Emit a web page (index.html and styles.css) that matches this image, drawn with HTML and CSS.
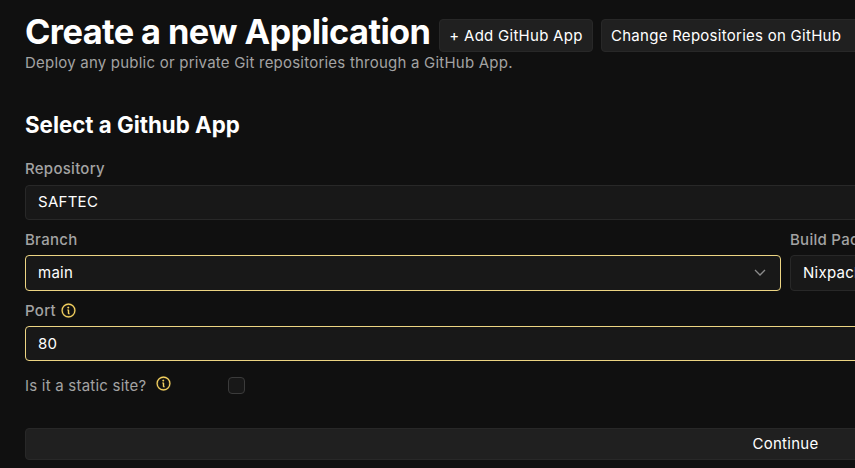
FILE: index.html
```html
<!DOCTYPE html>
<html lang="en">
<head>
<meta charset="utf-8">
<title>Create a new Application</title>
<link rel="stylesheet" href="styles.css">
</head>
<body>
<svg class="sprite" aria-hidden="true">
  <symbol id="info" viewBox="0 0 256 256">
    <path fill="currentColor" d="M128 24a104 104 0 1 0 104 104A104.110 104.110 0 0 0 128 24m0 192a88 88 0 1 1 88-88 88.100 88.100 0 0 1-88 88m16-40a8 8 0 0 1-8 8 16 16 0 0 1-16-16v-40a8 8 0 0 1 0-16 16 16 0 0 1 16 16v40a8 8 0 0 1 8 8m-32-92a12 12 0 1 1 12 12 12 12 0 0 1-12-12" stroke="currentColor" stroke-width="5"/>
  </symbol>
</svg>
<main class="page">
  <header class="header">
    <h1 class="title">Create a new Application</h1>
    <button class="button add">+ Add GitHub App</button>
    <button class="button change">Change Repositories on GitHub</button>
  </header>
  <p class="subtitle">Deploy any public or private Git repositories through a GitHub App.</p>
  <h2 class="section">Select a Github App</h2>
  <form class="form">
    <div class="field">
      <div class="label">Repository</div>
      <div class="control repository">SAFTEC</div>
    </div>
    <div class="row">
      <div class="field">
        <div class="label">Branch</div>
        <div class="control active tall">main
          <svg class="chevron" viewBox="0 0 12 8"><path d="M1 1l5 5 5-5"/></svg>
        </div>
      </div>
      <div class="field">
        <div class="label">Build Pack</div>
        <div class="control tall">Nixpacks</div>
      </div>
    </div>
    <div class="field port">
      <div class="label">Port <svg class="info"><use href="#info"/></svg></div>
      <div class="control active">80</div>
    </div>
    <div class="check">
      <div class="check-label"><span class="check-text">Is it a static site?</span> <svg class="info raised"><use href="#info"/></svg></div>
      <span class="box"></span>
    </div>
    <button class="button submit" type="button">Continue</button>
  </form>
</main>
</body>
</html>
```
FILE: styles.css
```css
* { box-sizing: border-box; margin: 0; }
html { overflow: hidden; background: #101010; }
body {
  height: 468px;
  overflow: hidden;
  background: #101010;
  color: #fff;
  font: 400 15px/22px Inter, "Liberation Sans", sans-serif;
  letter-spacing: 0.27px;
}
.sprite { position: absolute; width: 0; height: 0; }
.page { width: 1546px; padding: 14px 0 0 25px; }
.header { display: flex; align-items: flex-end; height: 38px; }
.title { width: 414px; padding-bottom: 1px; font-size: 34.4px; line-height: 38px; font-weight: 700; letter-spacing: -0.6px; white-space: nowrap; }
.button {
  display: flex; align-items: center; justify-content: center;
  height: 33px; padding: 0; flex: none;
  background: #202020; border: 1px solid #282828; border-radius: 4px;
  color: #fff; font: inherit; letter-spacing: inherit; white-space: nowrap;
}
.add { width: 154px; margin-right: 8px; }
.change { width: 261px; justify-content: flex-start; padding-left: 9px; }
.subtitle { color: #a3a3a3; letter-spacing: 0.22px; line-height: 22px; }
.section { margin-top: 36px; font-size: 22.3px; line-height: 29px; font-weight: 700; letter-spacing: 0; }
.form { margin-top: 19px; }
.label { display: flex; align-items: center; height: 22px; margin-bottom: 5px; color: #a3a3a3; font-weight: 450; }
.control {
  display: flex; align-items: center; height: 35px; padding: 0 12px;
  background: #181818; border: 1px solid #282828; border-radius: 4px;
}
.repository { padding-bottom: 1px; }
.tall { height: 36px; }
.active { border-color: #edd583; }
.row { display: grid; grid-template-columns: 1fr 1fr; gap: 9px; margin-top: 9px; }
.row .label { margin-bottom: 4px; }
.port { margin-top: 9px; }
.port .label { margin-bottom: 4px; }
.chevron { width: 12px; height: 8px; margin-left: auto; margin-right: 2px; fill: none; stroke: #8b8b8b; stroke-width: 1.3; }
.info { width: 17px; height: 17px; margin: 0 0 1px 4px; color: #f8d562; }
.check { display: flex; align-items: flex-start; height: 22px; margin-top: 14px; color: #a3a3a3; }
.check-label { display: flex; width: 203px; }
.check-text { letter-spacing: 0.22px; }
.raised { margin: 0 0 0 9px; }
.box { width: 17px; height: 17px; margin-top: 2px; background: #181818; border: 1px solid #3b3b3b; border-radius: 4px; }
.submit { width: 100%; height: 32px; margin-top: 31px; }
```
